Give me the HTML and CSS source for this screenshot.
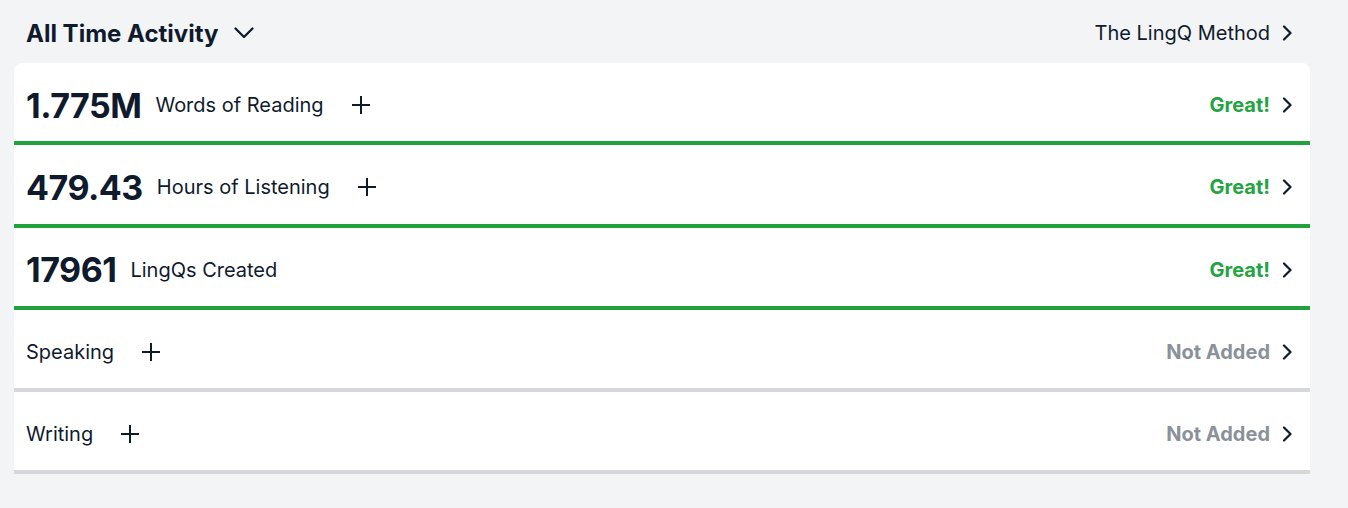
FILE: index.html
```html
<!DOCTYPE html>
<html>

<head>
    <title>All Time Activity</title>
    <link rel="stylesheet" href="styles.css">
</head>

<body>
    <div class="page">
        <div class="header">
            <div class="title">
                All Time Activity
                <svg class="chevron-down" width="20" height="12" viewBox="0 0 20 12">
                    <path d="M1.5 1.5 L10 10 L18.5 1.5" fill="none" stroke="#0f1b2d" stroke-width="2.3" stroke-linecap="round" stroke-linejoin="round" />
                </svg>
            </div>
            <a class="method-link">
                The LingQ Method
                <svg class="chevron" width="10" height="16" viewBox="0 0 10 16">
                    <path d="M2 1.5 L8.5 8 L2 14.5" fill="none" stroke="#0f1b2d" stroke-width="2.2" stroke-linecap="round" stroke-linejoin="round" />
                </svg>
            </a>
        </div>

        <div class="card">
            <div class="stat-row done">
                <div class="stat-left">
                    <span class="stat-number">1.775M</span>
                    <span class="stat-label">Words of Reading</span>
                    <svg class="plus" width="18" height="18" viewBox="0 0 18 18">
                        <path d="M9 0 V18 M0 9 H18" stroke="#0f1b2d" stroke-width="2" />
                    </svg>
                </div>
                <div class="stat-right">
                    <span class="status great">Great!</span>
                    <svg class="chevron" width="10" height="16" viewBox="0 0 10 16">
                        <path d="M2 1.5 L8.5 8 L2 14.5" fill="none" stroke="#0f1b2d" stroke-width="2.2" stroke-linecap="round" stroke-linejoin="round" />
                    </svg>
                </div>
            </div>

            <div class="stat-row done">
                <div class="stat-left">
                    <span class="stat-number">479.43</span>
                    <span class="stat-label">Hours of Listening</span>
                    <svg class="plus" width="18" height="18" viewBox="0 0 18 18">
                        <path d="M9 0 V18 M0 9 H18" stroke="#0f1b2d" stroke-width="2" />
                    </svg>
                </div>
                <div class="stat-right">
                    <span class="status great">Great!</span>
                    <svg class="chevron" width="10" height="16" viewBox="0 0 10 16">
                        <path d="M2 1.5 L8.5 8 L2 14.5" fill="none" stroke="#0f1b2d" stroke-width="2.2" stroke-linecap="round" stroke-linejoin="round" />
                    </svg>
                </div>
            </div>

            <div class="stat-row done">
                <div class="stat-left">
                    <span class="stat-number">17961</span>
                    <span class="stat-label">LingQs Created</span>
                </div>
                <div class="stat-right">
                    <span class="status great">Great!</span>
                    <svg class="chevron" width="10" height="16" viewBox="0 0 10 16">
                        <path d="M2 1.5 L8.5 8 L2 14.5" fill="none" stroke="#0f1b2d" stroke-width="2.2" stroke-linecap="round" stroke-linejoin="round" />
                    </svg>
                </div>
            </div>

            <div class="stat-row empty">
                <div class="stat-left">
                    <span class="stat-label">Speaking</span>
                    <svg class="plus" width="18" height="18" viewBox="0 0 18 18">
                        <path d="M9 0 V18 M0 9 H18" stroke="#0f1b2d" stroke-width="2" />
                    </svg>
                </div>
                <div class="stat-right">
                    <span class="status missing">Not Added</span>
                    <svg class="chevron" width="10" height="16" viewBox="0 0 10 16">
                        <path d="M2 1.5 L8.5 8 L2 14.5" fill="none" stroke="#0f1b2d" stroke-width="2.2" stroke-linecap="round" stroke-linejoin="round" />
                    </svg>
                </div>
            </div>

            <div class="stat-row empty">
                <div class="stat-left">
                    <span class="stat-label">Writing</span>
                    <svg class="plus" width="18" height="18" viewBox="0 0 18 18">
                        <path d="M9 0 V18 M0 9 H18" stroke="#0f1b2d" stroke-width="2" />
                    </svg>
                </div>
                <div class="stat-right">
                    <span class="status missing">Not Added</span>
                    <svg class="chevron" width="10" height="16" viewBox="0 0 10 16">
                        <path d="M2 1.5 L8.5 8 L2 14.5" fill="none" stroke="#0f1b2d" stroke-width="2.2" stroke-linecap="round" stroke-linejoin="round" />
                    </svg>
                </div>
            </div>
        </div>
    </div>
</body>

</html>
```

FILE: styles.css
```css
body {
    background: #f3f4f6;
    font-family: 'Inter', 'Noto Sans', sans-serif;
    color: #0f1b2d;
    margin: 0;
    padding: 0;
}

.page {
    width: 1296px;
    padding: 0 14px;
}

.header {
    display: flex;
    align-items: center;
    justify-content: space-between;
    height: 63px;
    padding: 3px 18px 0 12px;
    box-sizing: border-box;
}

.title {
    display: flex;
    align-items: center;
    gap: 16px;
    font-size: 24px;
    font-weight: 700;
}

.method-link {
    display: flex;
    align-items: center;
    gap: 12px;
    font-size: 20px;
    color: #0f1b2d;
}

.card {
    background: #ffffff;
    border-radius: 8px 8px 0 0;
}

.stat-row {
    display: flex;
    align-items: center;
    justify-content: space-between;
    height: 72.3px;
    padding: 6px 18px 0 12px;
}

.stat-row.done {
    border-bottom: 4px solid #22a23b;
}

.stat-row.empty {
    border-bottom: 4px solid #d5d7db;
}

.stat-left {
    display: flex;
    align-items: center;
}

.stat-number {
    font-size: 34px;
    font-weight: 700;
    letter-spacing: -0.5px;
    margin-right: 14px;
}

.stat-label {
    font-size: 20px;
    margin-right: 28px;
}

.stat-right {
    display: flex;
    align-items: center;
    gap: 12px;
}

.status {
    font-size: 20px;
    font-weight: 700;
}

.great {
    color: #23a443;
}

.missing {
    color: #8a9199;
}
```
